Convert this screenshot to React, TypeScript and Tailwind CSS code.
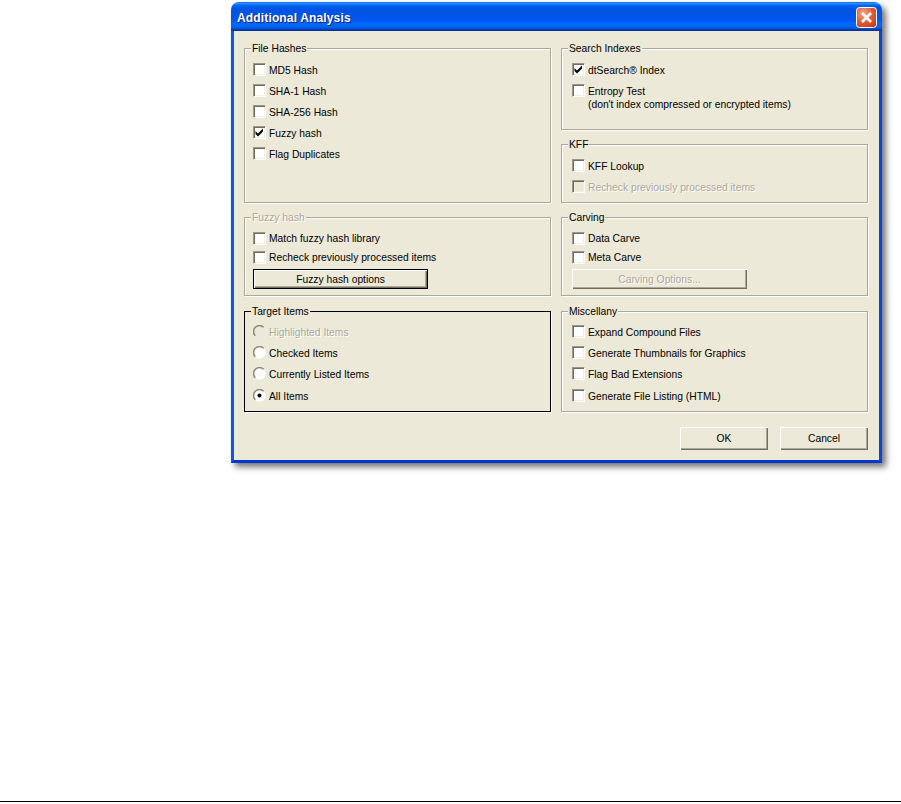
export default function App() {
  return <Dialog />;
}

const disabledText = "text-[#aca899] [text-shadow:1px_1px_0_#fff]";

function Check({ label, checked, disabled }: { label: React.ReactNode; checked?: boolean; disabled?: boolean }) {
  return (
    <div className="flex h-[21px] items-center">
      <Box checked={checked} disabled={disabled} />
      <span className={disabled ? `ml-[3px] mt-[1px] ${disabledText}` : "ml-[3px] mt-[1px]"}>{label}</span>
    </div>
  );
}

function Box({ checked, disabled }: { checked?: boolean; disabled?: boolean }) {
  return (
    <span className={`flex h-[13px] w-[13px] shrink-0 items-center justify-center border-[1px] border-t-[#9a988a] border-l-[#9a988a] border-r-white border-b-white shadow-[inset_1px_1px_0_#6f6d62,inset_-1px_-1px_0_#f1efe2] ${disabled ? "bg-[#ece9d8]" : "bg-white"}`}>
      {checked && (
        <svg width="9" height="9" viewBox="0 0 9 9">
          <path d="M0.5 3 L3 5.5 L8 0.5 V3.5 L3 8.5 L0.5 6 Z" fill="#000" />
        </svg>
      )}
    </span>
  );
}

function Radio({ label, checked, disabled }: { label: string; checked?: boolean; disabled?: boolean }) {
  return (
    <div className="flex h-[21px] items-center">
      <svg width="13" height="13" viewBox="0 0 13 13" className="shrink-0">
        <circle cx="6.5" cy="6.5" r="6.2" fill={disabled ? "#ece9d8" : "#fff"} />
        <path d="M2.3 10.7 A5.9 5.9 0 0 1 10.7 2.3" fill="none" stroke="#8a887b" strokeWidth="1.5" />
        {checked && <circle cx="6.5" cy="6.5" r="2" fill="#000" />}
      </svg>
      <span className={disabled ? `ml-[3px] mt-[1px] ${disabledText}` : "ml-[3px] mt-[1px]"}>{label}</span>
    </div>
  );
}

function Group({ title, disabled, focus, className, children }: { title: string; disabled?: boolean; focus?: boolean; className: string; children: React.ReactNode }) {
  return (
    <div className={`relative border-[1px] ${focus ? "border-black shadow-[1px_1px_0_#fff]" : "border-[#aca899] shadow-[1px_1px_0_#fff,inset_1px_1px_0_#fff]"} ${className}`}>
      <span className={`absolute left-[6px] top-[-7px] bg-[#ece9d8] px-[1px] leading-[13px] ${disabled ? disabledText : ""}`}>{title}</span>
      {children}
    </div>
  );
}

function Btn({ label, disabled, focus, className }: { label: string; disabled?: boolean; focus?: boolean; className: string }) {
  return (
    <div className={`flex items-center justify-center shadow-[inset_1px_1px_0_#fff,inset_-1px_-1px_0_#716f64,inset_-2px_-2px_0_#aca899] ${focus ? "border-[1px] border-black" : ""} ${disabled ? disabledText : ""} ${className}`}>
      {label}
    </div>
  );
}

function Dialog() {
  return (
    <div className="flex h-[804px] w-[901px] flex-col bg-white font-['Liberation_Sans',sans-serif] text-[10.3px] leading-[13px] text-black">
      <div className="ml-[231px] mt-[2px] flex h-[461px] w-[651px] flex-col rounded-t-[8px] shadow-[4px_4px_6px_rgba(0,0,0,0.55)]">
        <div className="flex h-[29px] items-center justify-between rounded-t-[8px] bg-[linear-gradient(180deg,#0058ee_0%,#3593ff_4%,#288eff_6%,#127dff_8%,#036ffc_10%,#0262ee_14%,#0057e5_20%,#0054e3_24%,#0055eb_56%,#005bf5_66%,#026afe_76%,#0062ef_86%,#0052d6_92%,#0040ab_94%,#003092_100%)] pl-[6px] pr-[5px] pt-[2px]">
          <span className="mt-[2px] text-[12px] font-bold tracking-[0.15px] text-white [text-shadow:1px_1px_0_#0f1f6f]">Additional Analysis</span>
          <svg width="21" height="21" viewBox="0 0 21 21">
            <defs>
              <radialGradient id="cl" cx="35%" cy="30%" r="85%">
                <stop offset="0%" stopColor="#f0a58c" />
                <stop offset="55%" stopColor="#dd5b38" />
                <stop offset="100%" stopColor="#c23a1a" />
              </radialGradient>
            </defs>
            <rect x="0.5" y="0.5" width="20" height="20" rx="3" fill="url(#cl)" stroke="#fff" />
            <path d="M6 6 L15 15 M15 6 L6 15" stroke="#fff" strokeWidth="2.6" />
          </svg>
        </div>
        <div className="flex flex-1 flex-col border-x-[3px] border-b-[3px] border-l-[#0a57e8] border-r-[#0746d8] border-b-[#0535c8] bg-[#ece9d8] pl-[10px] pt-[17px]">
          <div className="flex gap-[10px]">
            <div className="flex w-[307px] flex-col">
              <Group title="File Hashes" className="h-[155px] pl-[8px] pt-[10px]">
                <Check label="MD5 Hash" />
                <Check label="SHA-1 Hash" />
                <Check label="SHA-256 Hash" />
                <Check label="Fuzzy hash" checked />
                <Check label="Flag Duplicates" />
              </Group>
              <Group title="Fuzzy hash" disabled className="mt-[14px] h-[79px] pl-[8px] pt-[11px]">
                <div className="[&>div]:h-[19px] [&>div>span:last-child]:mt-0">
                  <Check label="Match fuzzy hash library" />
                  <Check label="Recheck previously processed items" />
                </div>
                <Btn label="Fuzzy hash options" focus className="mt-[2px] h-[20px] w-[175px]" />
              </Group>
              <Group title="Target Items" focus className="mt-[15px] h-[101px] pl-[8px] pt-[9px]">
                <Radio label="Highlighted Items" disabled />
                <Radio label="Checked Items" />
                <Radio label="Currently Listed Items" />
                <div className="mt-[1px]"><Radio label="All Items" checked /></div>
              </Group>
            </div>
            <div className="flex w-[307px] flex-col">
              <Group title="Search Indexes" className="h-[82px] pl-[10px] pt-[10px]">
                <Check label="dtSearch® Index" checked />
                <Check label="Entropy Test" />
                <div className="ml-[16px] mt-[-3px] leading-[13px]">(don't index compressed or encrypted items)</div>
              </Group>
              <Group title="KFF" className="mt-[14px] h-[59px] pl-[10px] pt-[10px]">
                <Check label="KFF Lookup" />
                <Check label="Recheck previously processed items" disabled />
              </Group>
              <Group title="Carving" className="mt-[14px] h-[79px] pl-[10px] pt-[11px]">
                <div className="[&>div]:h-[19px] [&>div>span:last-child]:mt-0">
                  <Check label="Data Carve" />
                  <Check label="Meta Carve" />
                </div>
                <Btn label="Carving Options..." disabled className="mt-[2px] h-[20px] w-[175px]" />
              </Group>
              <Group title="Miscellany" className="mt-[15px] h-[101px] pl-[10px] pt-[9px]">
                <Check label="Expand Compound Files" />
                <Check label="Generate Thumbnails for Graphics" />
                <Check label="Flag Bad Extensions" />
                <div className="mt-[1px]"><Check label="Generate File Listing (HTML)" /></div>
              </Group>
            </div>
          </div>
          <div className="mr-[11px] mt-[15px] flex justify-end gap-[12px]">
            <Btn label="OK" className="h-[23px] w-[88px]" />
            <Btn label="Cancel" className="h-[23px] w-[88px]" />
          </div>
        </div>
      </div>
      <div className="mb-[2px] mt-auto h-[1px] bg-black" />
    </div>
  );
}
